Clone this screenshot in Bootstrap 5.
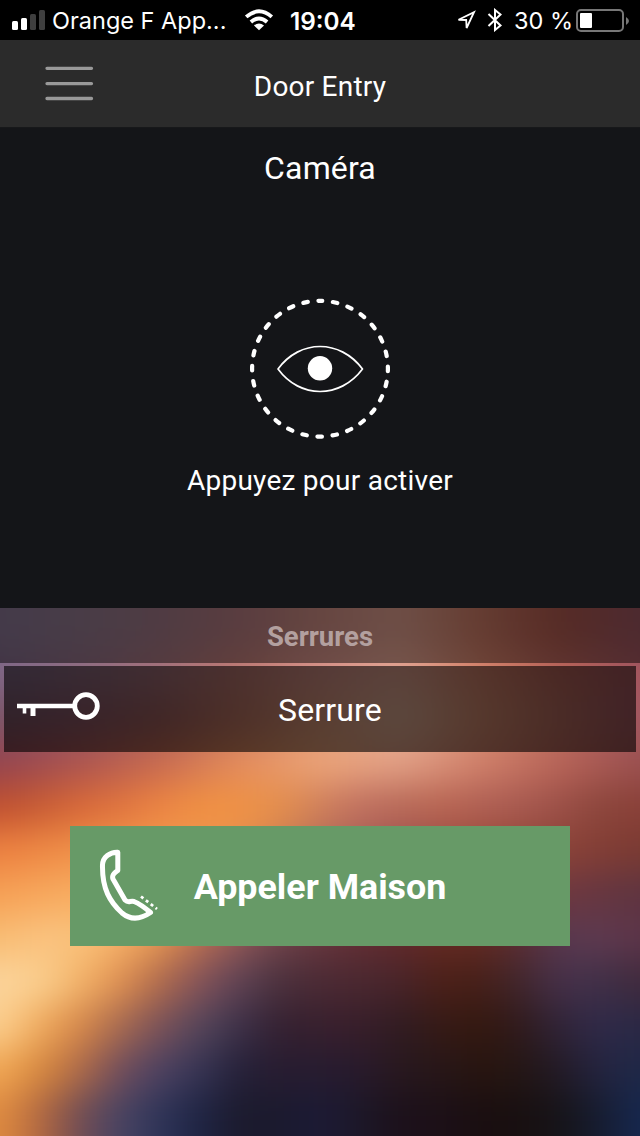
<!DOCTYPE html>
<html lang="fr">
<head>
<meta charset="utf-8">
<meta name="viewport" content="width=device-width, initial-scale=1">
<title>Door Entry</title>
<link href="https://cdn.jsdelivr.net/npm/bootstrap@5.3.0/dist/css/bootstrap.min.css" rel="stylesheet">
<style>
body{font-family:Roboto,sans-serif;background:#141518;color:#fff}
.screen{width:640px;height:1136px}
.status{height:40px;background:#000;font-family:Inter,sans-serif;font-size:23.5px;line-height:40px;padding-left:11px}
.status span{position:relative;top:1px}
.carrier{margin-left:7px;width:175px}
.wifi{margin-left:17px}
.clock{margin-left:16px;width:68px;font-size:24.3px}
.loc{margin-left:98px}
.bt{margin-left:11px}
.pct{margin-left:11px;width:57px}
.bat{margin-left:5px;margin-top:2px}
.topbar{height:88px;background:#2b2b2b;border-bottom:1px solid #17181a;font-size:28px;letter-spacing:.2px}
.burger{left:44px;top:24px}
.page-name{padding-top:6px}
.camera{height:480px;background:#141518}
.camera h1{font-size:32px;line-height:40px;margin:20px 0 0;font-weight:400;letter-spacing:.15px}
.eye{margin-top:107px}
.hint{font-size:28px;line-height:34px;letter-spacing:.25px;margin-top:19px}
.lower{height:528px}
.glow{inset:0 -40px -44px;filter:blur(17px);z-index:0}
.glow div{height:44px}
.glow div:first-child{height:88px;margin-top:-44px}
.glow div:last-child{height:88px}
.locks-title{height:55px;background:rgba(0,0,0,.48);color:#b3a09f;font-size:27.5px;line-height:58px}
.lock-item{height:86px;margin:3px 4px 0;background:rgba(0,0,0,.6);font-size:32px;letter-spacing:.15px}
.lock-name{padding-left:20px;padding-top:1px}
.key{left:12px;top:24px}
.call{width:500px;height:120px;margin-top:74px;background:#679a67;font-size:35.8px}
.call-name{position:relative;top:2px}
.phone{left:28px;top:20px}
</style>
</head>
<body>
<main class="screen overflow-hidden mx-auto d-flex flex-column">
  <div class="status d-flex align-items-center text-nowrap">
    <svg width="34" height="22" viewBox="0 0 34 22"><g fill="#fff"><rect x="1" y="12" width="6" height="9" rx="1.5"/><rect x="10" y="9" width="6" height="12" rx="1.5"/></g><g fill="#3f3f3f"><rect x="19" y="5" width="6" height="16" rx="1.5"/><rect x="28" y="1" width="6" height="20" rx="1.5"/></g></svg>
    <span class="carrier">Orange F App...</span>
    <svg class="wifi" width="30" height="22" viewBox="0 0 30 22"><g fill="none" stroke="#fff" stroke-width="3.8"><path d="M2.2 7.9Q15-3.200 27.8 7.9"/><path d="M6.900 13Q15 5.800 23.100 13"/></g><path d="M10 16.400Q15 12.400 20 16.400L15 21.300Z" fill="#fff"/></svg>
    <span class="clock fw-semibold">19:04</span>
    <svg class="loc" width="20" height="20" viewBox="0 0 20 20"><path d="M2.500 9.800 18 2.200 10.600 18L10.200 10Z" fill="none" stroke="#fff" stroke-width="1.800"/></svg>
    <svg class="bt" width="16" height="24" viewBox="0 0 16 24"><path d="M1.500 6 13.500 17.500 8 22V2L13.500 6.500 1.500 18" fill="none" stroke="#fff" stroke-width="2"/></svg>
    <span class="pct">30&nbsp;%</span>
    <svg class="bat" width="54" height="24" viewBox="0 0 54 24"><rect x="1" y="1" width="46" height="21" rx="4" fill="none" stroke="#777" stroke-width="2"/><rect x="4" y="4" width="12" height="15" rx="1" fill="#fff"/><path d="M50 8q6 4 0 8z" fill="#777"/></svg>
  </div>
  <header class="topbar d-flex align-items-center justify-content-center position-relative">
    <svg class="burger position-absolute" width="50" height="40" viewBox="0 0 50 40"><path d="M3 4.3H47.500M3 19.600H47.500M3 34.500H47.500" stroke="#999" stroke-width="3.3" stroke-linecap="round"/></svg>
    <span class="page-name">Door Entry</span>
  </header>
  <section class="camera d-flex flex-column align-items-center">
    <h1>Caméra</h1>
    <svg class="eye" width="150" height="150" viewBox="0 0 150 150"><circle cx="75" cy="73.700" r="67.900" fill="none" stroke="#fff" stroke-width="4.200" stroke-linecap="round" stroke-dasharray="4.600 10.637" stroke-dashoffset="2.300" transform="rotate(-90 75 73.700)"/><path d="M33 74C55 44 95 44 117.500 74C95 104 55 104 33 74Z" fill="none" stroke="#fff" stroke-width="1.700" stroke-linejoin="round"/><circle cx="75" cy="73.300" r="12.200" fill="#fff"/></svg>
    <div class="hint">Appuyez pour activer</div>
  </section>
  <section class="lower position-relative overflow-hidden">
    <div class="glow position-absolute" id="glow"></div>
    <div class="position-relative d-flex flex-column">
      <div class="locks-title text-center fw-bold">Serrures</div>
      <div class="lock-item position-relative d-flex align-items-center justify-content-center">
        <svg class="key position-absolute" width="90" height="32" viewBox="0 0 90 32"><g fill="none" stroke="#fff"><path d="M1 16H57" stroke-width="4.500"/><path d="M8.500 16v7.500" stroke-width="3.600"/><path d="M17 16v10" stroke-width="5"/><circle cx="70" cy="16" r="11.300" stroke-width="4.800"/></g></svg>
        <span class="lock-name">Serrure</span>
      </div>
      <button class="call btn rounded-0 border-0 p-0 mx-auto text-white fw-bold position-relative">
        <svg class="phone position-absolute" width="64" height="76" viewBox="0 0 64 76"><path d="M19.800 6.300C12 6 4.800 11 4.500 19C4 43 12 56 24 67C33 74.500 43 73 52.500 66.500C46 61 41 57.500 36 55.500C32 54.500 30.500 57.500 27 54L15 33C13.500 29 16.500 27 19.800 24.500V18Z" fill="none" stroke="#fff" stroke-width="5" stroke-linejoin="round"/><path d="M43 50.500 59 63" stroke="#fff" stroke-width="2.800" stroke-dasharray="3 3.200" fill="none"/></svg>
        <span class="call-name">Appeler Maison</span>
      </button>
    </div>
  </section>
</main>
<script>
// Wallpaper: each row lists evenly spaced colours from left to right.
const rows = [
 '82708e 8c7488 987280 ac757a c4867d d49888 c2745f a65349 93525c',
 '7d6585 8e6a80 a4707a c07a72 d8938a e4a694 d6846c b9655b a3555f',
 '7a5568 8c5869 a0605f c27866 dd9a7c e6b59c d88e70 b96e60 a05560',
 '944450 ac5450 c86a50 e48c5c eca478 e2a086 d0806a b86458 9a5050',
 'c05030 c85c34 d86838 e0743e ec8442 f09042 f09244 e48f4c d0805a c07060 b86a58 b86552 b06054 a85a50 9c5048 8c463c 8a4038',
 'ec8040 f09048 f29a50 e89050 b06a58 9c5050 984838 8b4238 7a3a32',
 'f6a055 f8ae62 f4a75c d08850 905850 7c4044 78382a 6e3840 5e3440',
 'f8bc72 fac280 fbc47c f6b068 e49450 b86c50 8e5658 6c424a 66363e 622e34 602a2c 642a22 622a22 5a2e34 583850 5e3a50 5c3448',
 'fcd49c fad090 f3b268 e09050 b06a4c 84525a 5c4254 4a303c 4c2a34 4a2830 48242a 4c2018 461f18 40262c 46304a 403048 402a3c',
 'fcd090 f0aa5c d88848 a86a50 7a5058 54465c 3c3048 342030 38202e 381e2a 301c22 361a16 34180f 301a1c 302438 302a4a 2a2844',
 'f2a855 d8883c b06a48 704c5c 4c4262 363454 242038 281c30 261c30 281a2c 28181e 261618 28150f 241614 221a26 242440 1e2848',
 'e08c40 b46840 704c54 484464 2e3458 1e2444 1c1a2c 1a1a2e 1c1a36 1c1828 1c101a 1c1018 1a0e10 180f10 161418 161c30 162850'];
for (const row of rows) {
  const colours = row.split(' '), step = 640 / (colours.length - 1);
  const d = document.createElement('div');
  d.style.background = 'linear-gradient(90deg,' + colours.map((c, i) => '#' + c + ' ' + (40 + i * step) + 'px').join() + ')';
  document.getElementById('glow').append(d);
}
</script>
<script src="https://cdn.jsdelivr.net/npm/bootstrap@5.3.0/dist/js/bootstrap.bundle.min.js"></script>
</body>
</html>
